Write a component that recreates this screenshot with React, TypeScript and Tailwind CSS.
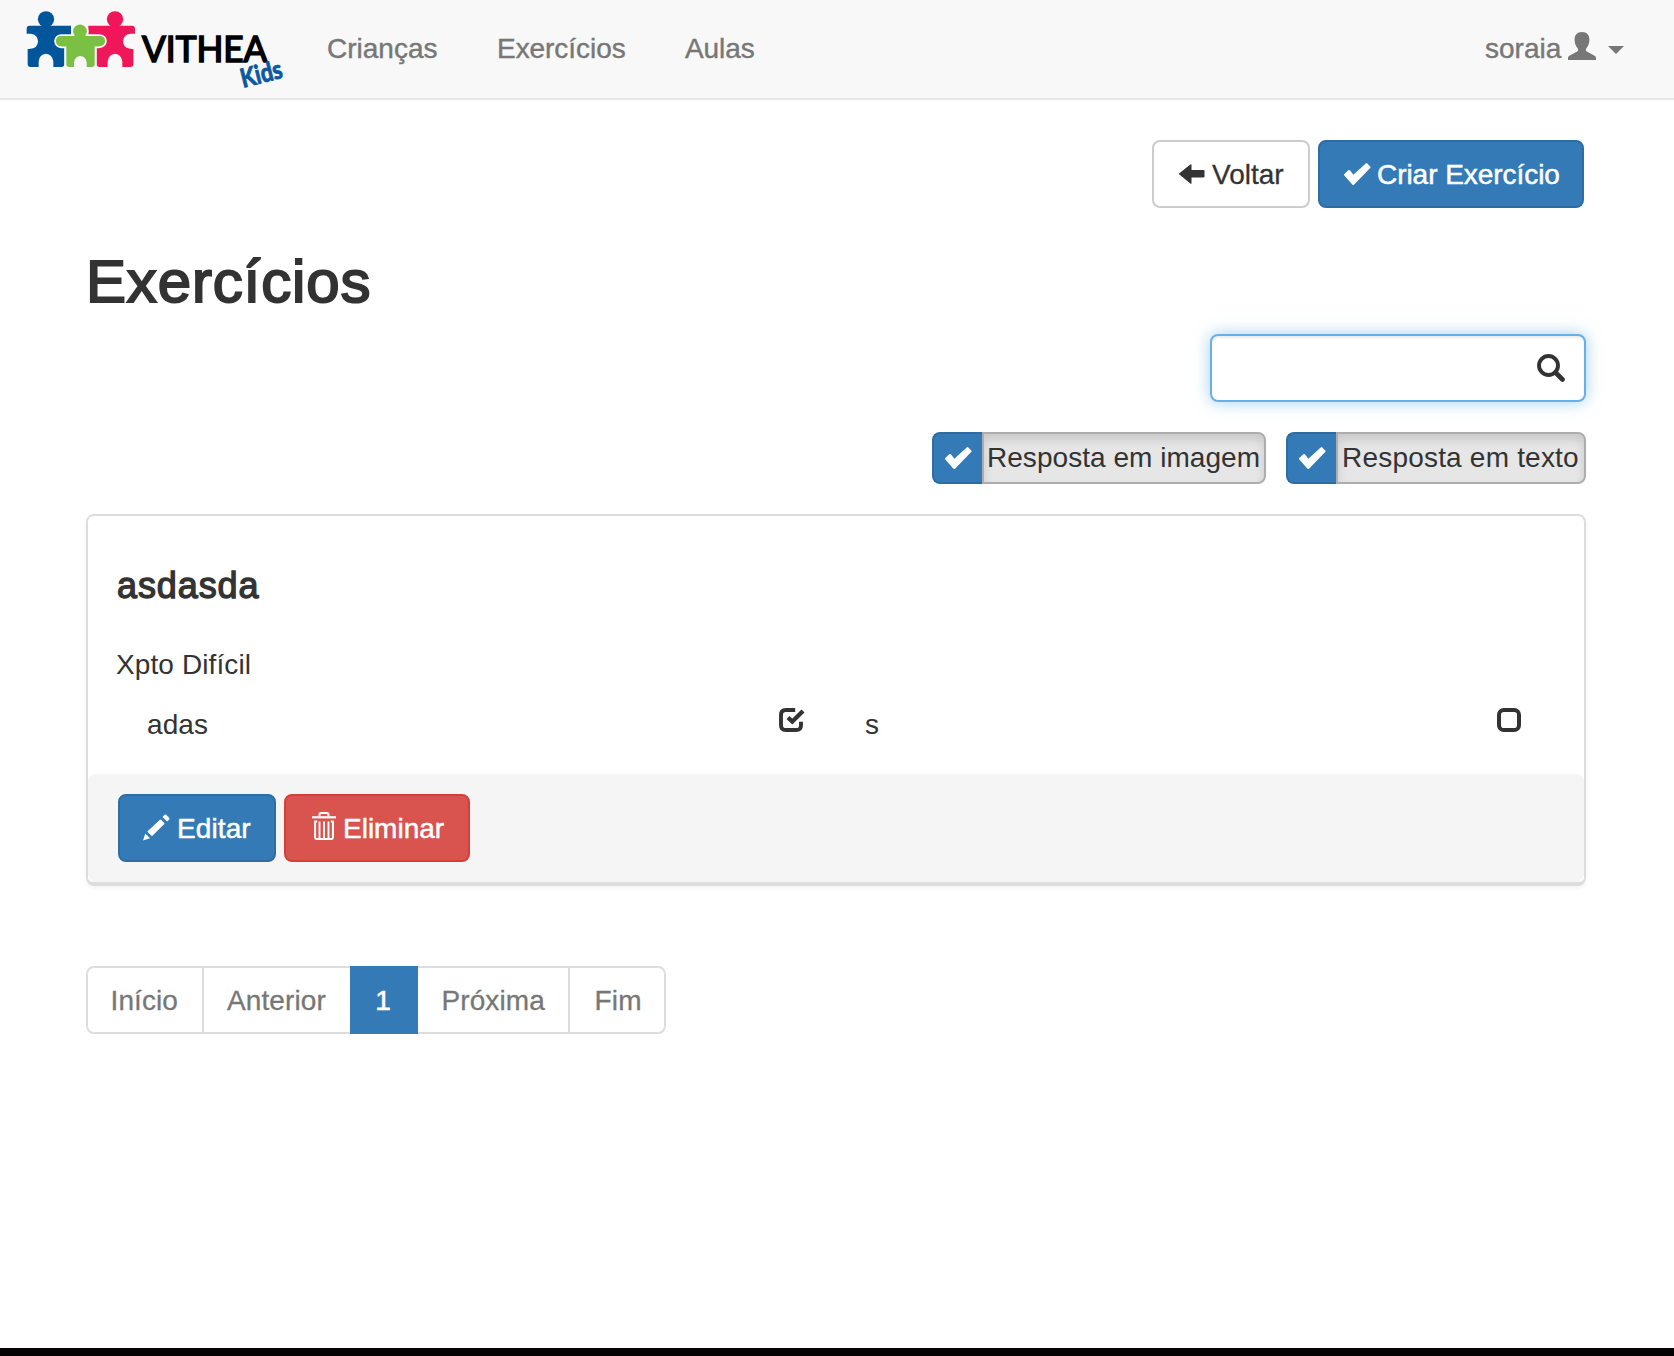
import React from "react";

type IconProps = { className?: string };

function Check({ className = "" }: IconProps) {
  return (
    <svg viewBox="0 0 27 23" className={`h-[23px] w-[27px] shrink-0 ${className}`} fill="currentColor">
      <path d="M.3 11 4.300 7.300q.8-.7 1.600 0L9.400 11.800 21.700.5q.8-.8 1.600 0l2.900 2.900q.7.700 0 1.500L10 21.700q-.8.8-1.500 0L.3 12.400q-.6-.7 0-1.400Z" />
    </svg>
  );
}

function ArrowLeft({ className = "" }: IconProps) {
  return (
    <svg viewBox="0 0 26 20" className={`h-5 w-[26px] shrink-0 ${className}`} fill="currentColor">
      <path d="M.4 9.300 11.300.5q1.200-.9 1.200.5V6h12q1 0 1 1v5.600q0 1-1 1h-12V19q0 1.400-1.200.5L.4 10.600q-.8-.6 0-1.300Z" />
    </svg>
  );
}

function User({ className = "" }: IconProps) {
  return (
    <svg viewBox="0 0 28 28" className={`h-7 w-7 shrink-0 ${className}`} fill="currentColor">
      <path d="M14 0c5 0 7.400 3.200 7.400 7.600 0 4.200-1.400 7-3.200 8.900-.4.500-.5 2.200.2 2.700l8.200 4.600c1 .6 1.400 1.200 1.400 2.200v2H0v-2c0-1 .4-1.600 1.400-2.200l8.200-4.600c.7-.5.6-2.200.2-2.700-1.800-1.900-3.200-4.700-3.200-8.900C6.600 3.200 9 0 14 0Z" />
    </svg>
  );
}

function Search({ className = "" }: IconProps) {
  return (
    <svg viewBox="0 0 28 28" className={`h-7 w-7 shrink-0 ${className}`} fill="none" stroke="currentColor">
      <circle cx="11.500" cy="11.500" r="9.500" strokeWidth="3.900" />
      <path d="m18.500 18.500 7 7" strokeWidth="4.600" strokeLinecap="round" />
    </svg>
  );
}

function Pencil({ className = "" }: IconProps) {
  return (
    <svg viewBox="0 0 27 27" className={`h-[27px] w-[27px] shrink-0 ${className}`} fill="currentColor">
      <path d="M0 26.500 2.300 19.500 7 24.200Z" />
      <path d="m4.300 17.600 12.600-11.900q.6-.5 1.200 0l3.200 3.200q.5.600 0 1.200L8.900 22.200Z" />
      <path d="m19.500 3.100 2-2.300q.8-.8 1.700 0l3 3q.8.900 0 1.700L24.100 7.500Z" />
    </svg>
  );
}

function Trash({ className = "" }: IconProps) {
  return (
    <svg viewBox="0 0 24 28" className={`h-7 w-6 shrink-0 ${className}`} fill="none" stroke="currentColor">
      <path d="M7.500 4.500V2.600Q7.500 1 9.100 1h5.800q1.600 0 1.600 1.600v1.900" strokeWidth="2" />
      <path d="M0 5.300h24" strokeWidth="2.200" />
      <path d="M3.100 9.500v15.800q0 1.700 1.700 1.700h14.400q1.700 0 1.700-1.700V9.500" strokeWidth="2" />
      <path d="M2.200 9.500h3M18.800 9.500h3M7.500 9.500v17M12 9.500v17M16.500 9.500v17" strokeWidth="1.900" />
    </svg>
  );
}

function BoxChecked({ className = "" }: IconProps) {
  return (
    <svg viewBox="0 0 26 24" className={`h-6 w-[26px] shrink-0 ${className}`} fill="none" stroke="currentColor">
      <path d="M16.200 2H6.800Q2 2 2 6.800v10.400Q2 22 6.800 22h10.400q4.800 0 4.800-4.800v-3.400" strokeWidth="3.900" />
      <path d="m9 9.400 4.300 4.200L24 3.100" strokeWidth="4.200" />
    </svg>
  );
}

function BoxEmpty({ className = "" }: IconProps) {
  return (
    <svg viewBox="0 0 24 24" className={`h-6 w-6 shrink-0 ${className}`} fill="none" stroke="currentColor">
      <rect x="2" y="2" width="20" height="20" rx="4.800" strokeWidth="4" />
    </svg>
  );
}

function Logo() {
  return (
    <svg viewBox="0 0 900 294" className="h-[98px] w-[300px] shrink-0">
      <g fill="#00559b">
        <circle cx="138" cy="58" r="24.500" />
        <path d="M88 77H213V112Q193 126 193 147V192Q193 201 184 201H160V184Q157 163 138 161Q118 163 116 184V201H92Q83 201 83 192V147H88Q114 146 114 124Q114 104 92 101H80V87Q80 77 88 77Z" />
      </g>
      <g fill="#ef1659">
        <circle cx="345" cy="58" r="24.500" />
        <path d="M265 77H396Q405 77 405 87V101H392Q369 104 369 124Q369 146 396 147H400V192Q400 201 391 201H367V184Q364 163 345 161Q326 163 323 184V201H299Q290 201 290 192V147Q290 126 265 110Z" />
      </g>
      <g fill="#7ac143" stroke="#f8f8f8" strokeWidth="11" paintOrder="stroke">
        <path d="M184 108H296Q314 108 315 123Q314 138 296 139H284V193Q284 201 275 201H260V187Q257 169 241 168Q225 169 222 187V201H208Q199 201 199 193V139H184Q169 137 168 123Q170 108 184 108Z" />
        <circle cx="240" cy="94" r="20.500" />
      </g>
      <path d="M184 108H296Q314 108 315 123Q314 138 296 139H184Q169 137 168 123Q170 108 184 108Z" fill="#7ac143" />
      <text x="426" y="185" textLength="376" lengthAdjust="spacingAndGlyphs" fontFamily="Lato" fontSize="111" fill="#000" stroke="#000" strokeWidth="5">
        VITHEA
      </text>
      <text
        transform="translate(729 263) rotate(-14)"
        textLength="126"
        lengthAdjust="spacingAndGlyphs"
        fontFamily="Lato"
        fontSize="78"
        fontWeight="700"
        fill="#0b5aa0"
        stroke="#0b5aa0"
        strokeWidth="3"
      >
        Kids
      </text>
    </svg>
  );
}

function FilterToggle({ label, className, textClass }: { label: string; className: string; textClass: string }) {
  return (
    <div className={`flex h-[52px] ${className}`}>
      <button className="flex w-[50px] items-center rounded-l-lg border-2 border-r-0 border-[#2e6da4] bg-[#337ab7] pl-[11px] text-white">
        <Check />
      </button>
      <span
        className={`flex-1 whitespace-nowrap rounded-r-lg border-2 border-[#adadad] bg-[#e6e6e6] pt-1 shadow-[inset_0_6px_10px_rgba(0,0,0,0.125)] ${textClass}`}
      >
        {label}
      </span>
    </div>
  );
}

export default function App() {
  return (
    <div className="flex h-[1356px] w-[1674px] flex-col overflow-hidden bg-white font-['Liberation_Sans',Arial,sans-serif] text-[28px] leading-10 text-[#333]">
      <header className="flex h-[100px] shrink-0 border-b-2 border-[#e7e7e7] bg-[#f8f8f8] text-[#777] [-webkit-text-stroke:0.4px]">
        <Logo />
        <nav className="flex pt-[29px] pl-[27px]">
          <a className="w-[170px]">Crianças</a>
          <a className="w-[188px] tracking-[-0.05px]">Exercícios</a>
          <a className="tracking-[-0.1px]">Aulas</a>
        </nav>
        <div className="mr-[50px] ml-auto flex pt-[29px]">
          <span className="w-[83px]">soraia</span>
          <User className="mt-[3px]" />
          <span className="mt-[17px] ml-3 h-0 w-0 border-x-8 border-t-8 border-x-transparent border-t-[#777]" />
        </div>
      </header>

      <main className="ml-[86px] flex w-[1500px] flex-1 flex-col">
        <div className="mt-10 mr-0.5 flex justify-end gap-2 [-webkit-text-stroke:0.3px]">
          <button className="flex h-[68px] w-[158px] rounded-lg border-2 border-[#ccc] pt-[13px] pl-[25px]">
            <ArrowLeft className="mt-[9px]" />
            <span className="ml-[7px]">Voltar</span>
          </button>
          <button className="flex h-[68px] w-[266px] rounded-lg border-2 border-[#2e6da4] bg-[#337ab7] pt-[13px] pl-6 text-white [-webkit-text-stroke:0.5px]">
            <Check className="mt-2" />
            <span className="ml-[6px] whitespace-nowrap tracking-[-0.05px]">Criar Exercício</span>
          </button>
        </div>

        <h1 className="mt-[41px] h-[66px] text-[60px] leading-[66px] tracking-[0.85px] [-webkit-text-stroke:2px]">
          Exercícios
        </h1>

        <div className="mt-[19px] flex h-[68px] w-[376px] items-center justify-end self-end rounded-lg border-2 border-[#66afe9] bg-white pr-[19px] shadow-[inset_0_2px_2px_rgba(0,0,0,0.075),0_0_16px_rgba(102,175,233,0.6)]">
          <Search />
        </div>

        <div className="mt-[30px] flex justify-end gap-5">
          <FilterToggle label="Resposta em imagem" className="w-[334px]" textClass="pl-[3px] tracking-[0.04px]" />
          <FilterToggle label="Resposta em texto" className="w-[300px]" textClass="pl-1 tracking-[0.2px]" />
        </div>

        <section className="mt-[30px] flex h-[372px] flex-col rounded-lg border-2 border-b-4 border-[#ddd] shadow-[0_2px_4px_rgba(0,0,0,0.05)]">
          <div className="h-[258px] pl-[29px]">
            <h4 className="pt-[50px] text-[36px] tracking-[0.9px] [-webkit-text-stroke:1.300px]">asdasda</h4>
            <p className="mt-[39px] ml-[-1px] tracking-[0.1px]">Xpto Difícil</p>
            <div className="mt-5 flex">
              <span className="ml-[30px] w-[632px] tracking-[0.1px]">adas</span>
              <BoxChecked className="mt-[3px]" />
              <span className="ml-[60px] w-[632px]">s</span>
              <BoxEmpty className="mt-[3px]" />
            </div>
          </div>
          <footer className="flex flex-1 gap-2 rounded-lg bg-[#f5f5f5] pt-5 pl-[30px] text-white [-webkit-text-stroke:0.5px]">
            <button className="flex h-[68px] w-[158px] rounded-lg border-2 border-[#2e6da4] bg-[#337ab7] pt-[13px] pl-[23px]">
              <Pencil className="mt-[5px]" />
              <span className="ml-[7px] tracking-[0.1px]">Editar</span>
            </button>
            <button className="flex h-[68px] w-[186px] rounded-lg border-2 border-[#d43f3a] bg-[#d9534f] pt-[13px] pl-[26px]">
              <Trash className="mt-[3px]" />
              <span className="ml-[7px]">Eliminar</span>
            </button>
          </footer>
        </section>

        <nav className="mt-20 flex h-[68px] w-[580px] rounded-lg border-2 border-[#ddd] text-[#777] [-webkit-text-stroke:0.3px]">
          <a className="w-[116px] border-r-2 border-[#ddd] pt-[13px] pl-[22.5px] tracking-[0.1px]">Início</a>
          <a className="w-[146px] pt-[13px] pl-[23px] tracking-[0.1px]">Anterior</a>
          <a className="-my-0.5 w-[68px] bg-[#337ab7] pt-[15px] pr-0.5 text-center text-white [-webkit-text-stroke:0.6px]">1</a>
          <a className="w-[152px] border-r-2 border-[#ddd] pt-[13px] pl-[23.5px] tracking-[0.1px]">Próxima</a>
          <a className="pt-[13px] pl-[24.5px] tracking-[0.2px]">Fim</a>
        </nav>
      </main>
      <div className="h-2 shrink-0 bg-[#040203]" />
    </div>
  );
}
